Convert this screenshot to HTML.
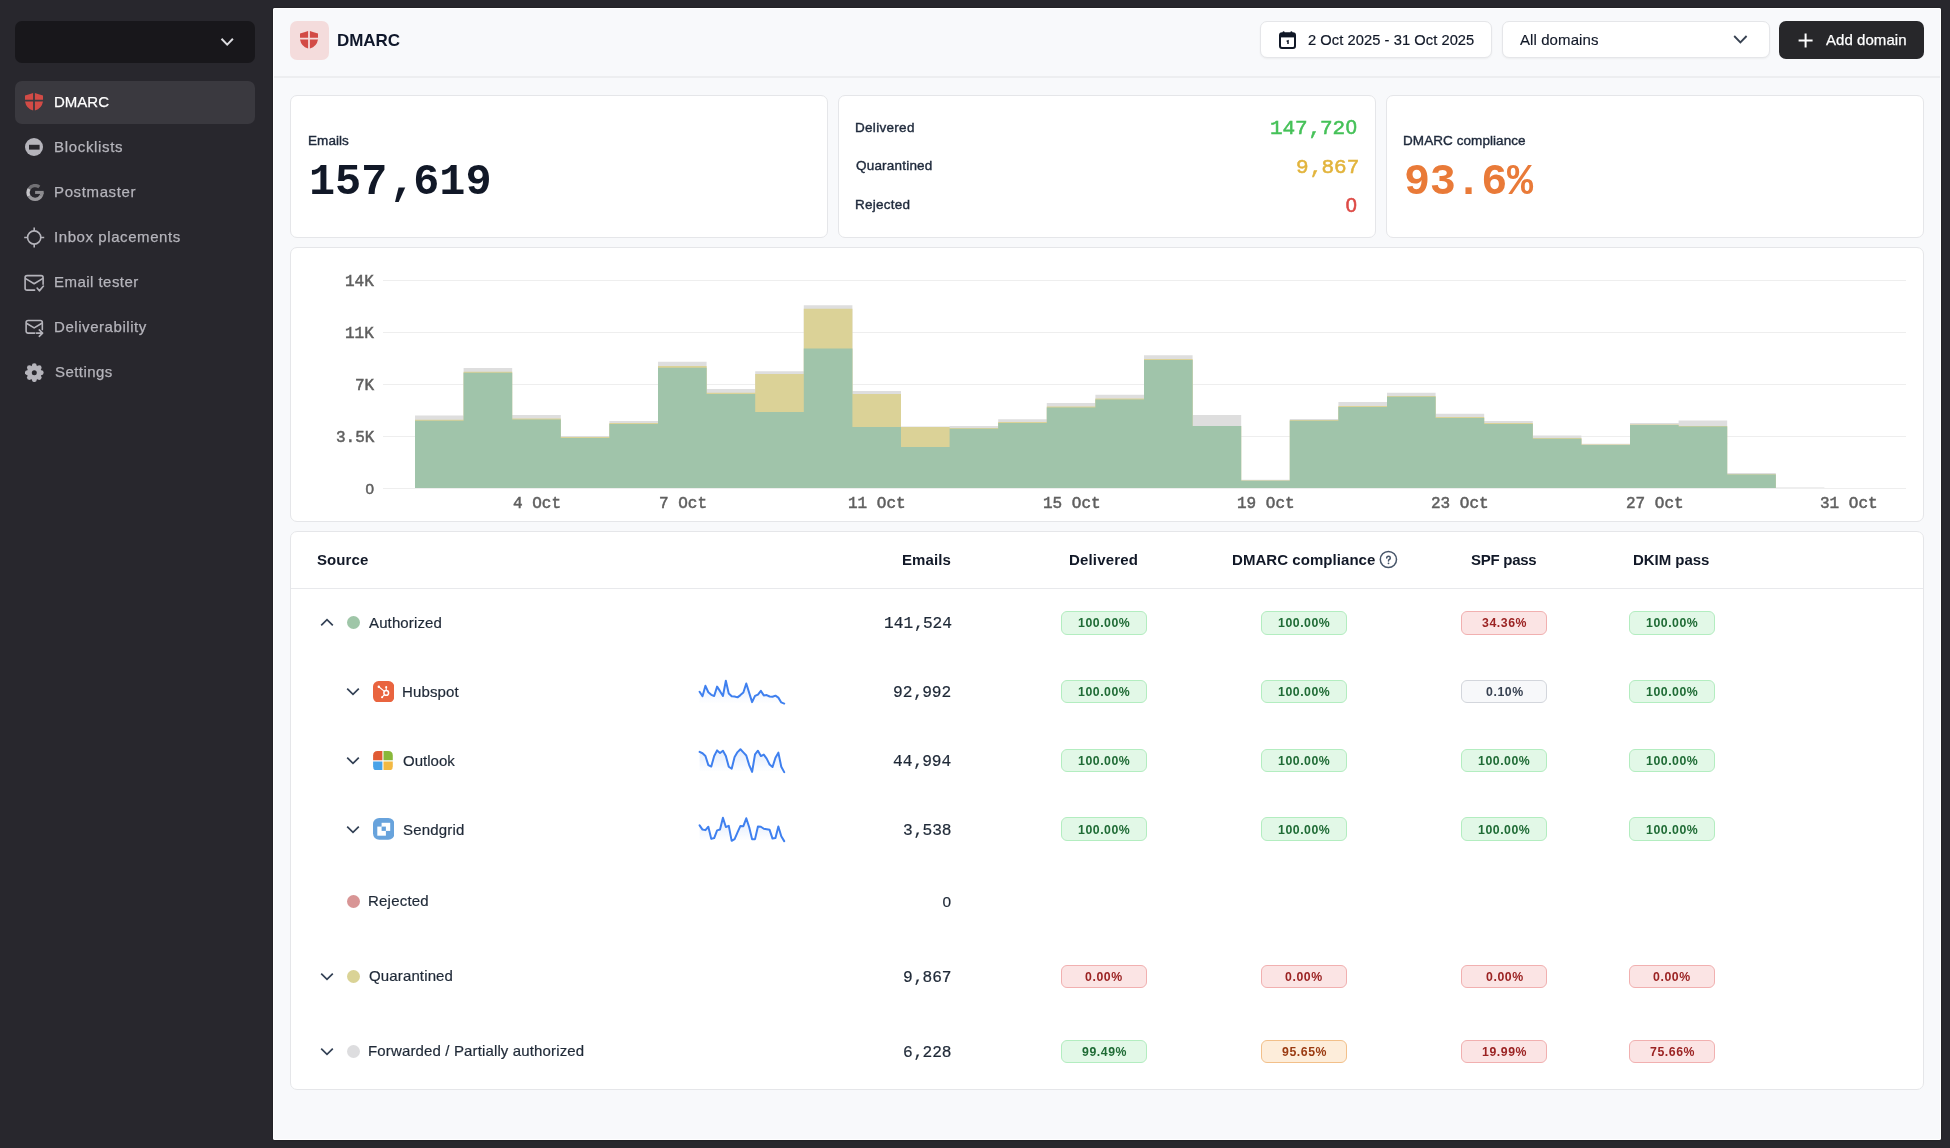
<!DOCTYPE html><html><head><meta charset="utf-8"><title>DMARC</title><style>
*{box-sizing:border-box;margin:0;padding:0}
html,body{width:1950px;height:1148px;overflow:hidden;background:#28272d;font-family:'Liberation Sans', sans-serif}
.abs{position:absolute}
.card{position:absolute;background:#fff;border:1px solid #e5e6e9;border-radius:7px}
.badge{position:absolute;width:86px;height:23.5px;border-radius:6px;border:1px solid}
</style></head><body>
<div class="abs" style="left:15px;top:21px;width:240px;height:42px;background:#18171b;border-radius:7px"></div>
<svg class="abs" style="left:219px;top:35px" width="16" height="14" viewBox="0 0 16 14"><path d="M2.5 3.8 L8.2 9.6 L13.9 3.8" fill="none" stroke="#dcdce0" stroke-width="2"/></svg>
<div class="abs" style="left:15px;top:81px;width:240px;height:43px;border-radius:7px;background:#3a393f"></div>
<svg class="abs" style="left:25px;top:93.2px" width="18" height="18" viewBox="0 0 18 18"><path d="M0 2.6 Q4.5 1.2 8.1 0 L8.1 6.7 L0 6.7 Z M9.9 0 Q13.5 1.2 18 2.6 L18 6.7 L9.9 6.7 Z M0 8.5 L8.1 8.5 L8.1 17.5 Q1.2 15.5 0 8.5 Z M9.9 8.5 L18 8.5 Q16.8 15.5 9.9 17.5 Z" fill="#d24b46"/></svg>
<div style="position:absolute;white-space:nowrap;line-height:1;will-change:transform;left:53.50px;top:94.40px;font-size:15px;color:#ffffff;-webkit-text-stroke:0.25px #ffffff;">DMARC</div>
<div style="position:absolute;white-space:nowrap;line-height:1;will-change:transform;left:53.50px;top:139.40px;font-size:15px;color:#b5b4bb;letter-spacing:0.676px;-webkit-text-stroke:0.25px #b5b4bb;">Blocklists</div>
<div style="position:absolute;white-space:nowrap;line-height:1;will-change:transform;left:53.50px;top:184.40px;font-size:15px;color:#b5b4bb;letter-spacing:0.626px;-webkit-text-stroke:0.25px #b5b4bb;">Postmaster</div>
<div style="position:absolute;white-space:nowrap;line-height:1;will-change:transform;left:53.50px;top:229.40px;font-size:15px;color:#b5b4bb;letter-spacing:0.582px;-webkit-text-stroke:0.25px #b5b4bb;">Inbox placements</div>
<div style="position:absolute;white-space:nowrap;line-height:1;will-change:transform;left:53.50px;top:274.40px;font-size:15px;color:#b5b4bb;letter-spacing:0.464px;-webkit-text-stroke:0.25px #b5b4bb;">Email tester</div>
<div style="position:absolute;white-space:nowrap;line-height:1;will-change:transform;left:53.50px;top:319.40px;font-size:15px;color:#b5b4bb;letter-spacing:0.559px;-webkit-text-stroke:0.25px #b5b4bb;">Deliverability</div>
<div style="position:absolute;white-space:nowrap;line-height:1;will-change:transform;left:54.50px;top:364.40px;font-size:15px;color:#b5b4bb;letter-spacing:0.429px;-webkit-text-stroke:0.25px #b5b4bb;">Settings</div>
<svg class="abs" style="left:25px;top:138px" width="18" height="18" viewBox="0 0 18 18"><circle cx="9" cy="9" r="9" fill="#b5b4bb"/><rect x="4" y="6.8" width="10.6" height="4.8" fill="#28272d"/></svg>
<svg class="abs" style="left:25.8px;top:184px" width="19" height="19" viewBox="0 0 19 19"><path d="M13.33 3.04 A6.95 6.95 0 0 0 3.16 4.84" fill="none" stroke="#717074" stroke-width="3.3"/><path d="M3.16 4.84 A6.95 6.95 0 0 0 3.16 12.20" fill="none" stroke="#c7c6ca" stroke-width="3.3"/><path d="M3.16 12.20 A6.95 6.95 0 0 0 15.19 11.78" fill="none" stroke="#98979b" stroke-width="3.3"/><path d="M15.07 11.99 A6.95 6.95 0 0 0 16.00 8.52" fill="none" stroke="#8c8b8f" stroke-width="3.3"/><path d="M9.1 8.42 H17.65" stroke="#8c8b8f" stroke-width="3.05"/></svg>
<svg class="abs" style="left:23px;top:226px" width="23" height="23" viewBox="0 0 23 23"><circle cx="11.2" cy="11.5" r="6.6" fill="none" stroke="#b5b4bb" stroke-width="1.6"/><path d="M11.2 1.5 V4.9 M11.2 18.1 V21.5 M1.2 11.5 H4.6 M17.8 11.5 H21.2" stroke="#b5b4bb" stroke-width="1.6"/></svg>
<svg class="abs" style="left:24.2px;top:273.8px" width="21" height="20" viewBox="0 0 21 20"><g fill="none" stroke="#b5b4bb" stroke-width="1.6" stroke-linecap="round" stroke-linejoin="round"><path d="M10.6 16.13 H3.1 Q1.1 16.13 1.1 14.13 V3.64 Q1.1 1.64 3.1 1.64 H17.1 Q19.1 1.64 19.1 3.64 V10.24"/><path d="M1.67 4.58 L10.16 9.79 L18.54 4.58"/><path d="M13.1 14.1 L15.37 16.86 L19.45 12.07"/></g></svg>
<svg class="abs" style="left:24.2px;top:319px" width="21" height="20" viewBox="0 0 21 20"><g fill="none" stroke="#b5b4bb" stroke-width="1.6" stroke-linecap="round" stroke-linejoin="round"><path d="M10.73 14.12 H4.12 Q2.12 14.12 2.12 12.12 V3.55 Q2.12 1.55 4.12 1.55 H16.32 Q18.32 1.55 18.32 3.55 V10.6"/><path d="M2.8 4.49 L10.16 8.91 L17.86 4.27"/><path d="M12.43 14.12 H18.6 M15.26 10.95 L18.6 14.12 L15.26 17.3"/></g></svg>
<svg class="abs" style="left:25px;top:363px" width="19" height="19" viewBox="0 0 19 19"><circle cx="9.3" cy="9.7" r="7.2" fill="#b5b4bb"/><circle cx="16.20" cy="9.70" r="2.45" fill="#b5b4bb"/><circle cx="14.18" cy="14.58" r="2.45" fill="#b5b4bb"/><circle cx="9.30" cy="16.60" r="2.45" fill="#b5b4bb"/><circle cx="4.42" cy="14.58" r="2.45" fill="#b5b4bb"/><circle cx="2.40" cy="9.70" r="2.45" fill="#b5b4bb"/><circle cx="4.42" cy="4.82" r="2.45" fill="#b5b4bb"/><circle cx="9.30" cy="2.80" r="2.45" fill="#b5b4bb"/><circle cx="14.18" cy="4.82" r="2.45" fill="#b5b4bb"/><circle cx="9.3" cy="9.7" r="2.5" fill="#28272d"/></svg>
<div class="abs" style="left:273px;top:8px;width:1668px;height:1132px;background:#f8f9fb;border-radius:2px;box-shadow:inset 0 0 0 1px #ffffff, 0 0 2px rgba(0,0,0,0.45)"></div>
<div class="abs" style="left:274px;top:76px;width:1666px;height:2px;background:#edeef0"></div>
<div class="abs" style="left:290px;top:21px;width:38.5px;height:38.5px;background:#f4dcdc;border-radius:7px"></div>
<svg class="abs" style="left:300px;top:31.0px" width="18" height="18" viewBox="0 0 18 18"><path d="M0 2.6 Q4.5 1.2 8.1 0 L8.1 6.7 L0 6.7 Z M9.9 0 Q13.5 1.2 18 2.6 L18 6.7 L9.9 6.7 Z M0 8.5 L8.1 8.5 L8.1 17.5 Q1.2 15.5 0 8.5 Z M9.9 8.5 L18 8.5 Q16.8 15.5 9.9 17.5 Z" fill="#d24b46"/></svg>
<div style="position:absolute;white-space:nowrap;line-height:1;will-change:transform;left:337.00px;top:31.81px;font-size:17px;color:#0f172a;font-weight:bold;letter-spacing:-0.048px;">DMARC</div>
<div class="card" style="left:1259.6px;top:21px;width:232.8px;height:37.4px;box-shadow:0 1px 2px rgba(0,0,0,0.05)"></div>
<svg class="abs" style="left:1278px;top:30px" width="19" height="20" viewBox="0 0 19 20"><rect x="2" y="3.2" width="15" height="14.8" rx="2" fill="none" stroke="#111827" stroke-width="2"/><rect x="2" y="3.2" width="15" height="4.2" fill="#111827"/><path d="M5.6 2.2 V4.6 M13.4 2.2 V4.6" stroke="#111827" stroke-width="2" stroke-linecap="round"/><path d="M8.6 11.4 L10 10.8 V14" fill="none" stroke="#111827" stroke-width="1.5"/></svg>
<div style="position:absolute;white-space:nowrap;line-height:1;will-change:transform;left:1307.80px;top:32.75px;font-size:14.7px;color:#111827;letter-spacing:0.058px;-webkit-text-stroke:0.2px #111827;">2 Oct 2025 - 31 Oct 2025</div>
<div class="card" style="left:1502px;top:21px;width:267.5px;height:37px;box-shadow:0 1px 2px rgba(0,0,0,0.05)"></div>
<div style="position:absolute;white-space:nowrap;line-height:1;will-change:transform;left:1519.80px;top:32.30px;font-size:15px;color:#111827;letter-spacing:0.087px;-webkit-text-stroke:0.15px #111827;">All domains</div>
<svg class="abs" style="left:1732px;top:33px" width="17" height="13" viewBox="0 0 17 13"><path d="M2.2 3 L8.4 9.4 L14.6 3" fill="none" stroke="#374151" stroke-width="1.8"/></svg>
<div class="abs" style="left:1779px;top:21px;width:145px;height:38px;background:#27272a;border-radius:7px"></div>
<svg class="abs" style="left:1797px;top:32px" width="17" height="17" viewBox="0 0 17 17"><path d="M8.6 1.5 V15.5 M1.6 8.5 H15.6" stroke="#fff" stroke-width="2"/></svg>
<div style="position:absolute;white-space:nowrap;line-height:1;will-change:transform;left:1826.00px;top:32.30px;font-size:15px;color:#ffffff;letter-spacing:0.054px;-webkit-text-stroke:0.25px #ffffff;">Add domain</div>
<div class="card" style="left:290px;top:95px;width:538px;height:143px"></div>
<div class="card" style="left:838px;top:95px;width:538px;height:143px"></div>
<div class="card" style="left:1386px;top:95px;width:538px;height:143px"></div>
<div style="position:absolute;white-space:nowrap;line-height:1;will-change:transform;left:307.50px;top:133.57px;font-size:13.5px;color:#1e293b;letter-spacing:0.069px;-webkit-text-stroke:0.4px #1e293b;">Emails</div>
<div style="position:absolute;white-space:nowrap;line-height:1;will-change:transform;left:308.60px;top:160.57px;font-size:43.5px;color:#111827;font-family:'Liberation Mono', monospace;font-weight:bold;letter-spacing:-0.038px;">157<span style="position:relative;left:0.05em">,</span>619</div>
<div style="position:absolute;white-space:nowrap;line-height:1;will-change:transform;left:855.10px;top:120.77px;font-size:13.5px;color:#1e293b;letter-spacing:0.298px;-webkit-text-stroke:0.4px #1e293b;">Delivered</div>
<div style="position:absolute;white-space:nowrap;line-height:1;will-change:transform;left:856.10px;top:159.27px;font-size:13.5px;color:#1e293b;letter-spacing:0.201px;-webkit-text-stroke:0.4px #1e293b;">Quarantined</div>
<div style="position:absolute;white-space:nowrap;line-height:1;will-change:transform;left:855.10px;top:198.07px;font-size:13.5px;color:#1e293b;letter-spacing:0.261px;-webkit-text-stroke:0.4px #1e293b;">Rejected</div>
<div style="position:absolute;white-space:nowrap;line-height:1;will-change:transform;left:1270.30px;top:118.31px;font-size:21px;color:#45c158;font-family:'Liberation Mono', monospace;letter-spacing:-0.119px;-webkit-text-stroke:0.55px #45c158;">147<span style="position:relative;left:0.05em">,</span>72<span style="font-family:'Liberation Sans';font-size:19.95px;line-height:0;margin-left:0.75px;letter-spacing:0.635px">0</span></div>
<div style="position:absolute;white-space:nowrap;line-height:1;will-change:transform;left:1295.50px;top:156.71px;font-size:21px;color:#e2b43c;font-family:'Liberation Mono', monospace;letter-spacing:0.073px;-webkit-text-stroke:0.55px #e2b43c;">9<span style="position:relative;left:0.05em">,</span>867</div>
<div style="position:absolute;white-space:nowrap;line-height:1;will-change:transform;left:1345.20px;top:195.51px;font-size:21px;color:#dd4a45;font-family:'Liberation Mono', monospace;-webkit-text-stroke:0.55px #dd4a45;"><span style="font-family:'Liberation Sans';font-size:19.95px;line-height:0;margin-left:0.75px;letter-spacing:0.754px">0</span></div>
<div style="position:absolute;white-space:nowrap;line-height:1;will-change:transform;left:1402.90px;top:133.57px;font-size:13.5px;color:#1e293b;letter-spacing:0.072px;-webkit-text-stroke:0.4px #1e293b;">DMARC compliance</div>
<div style="position:absolute;white-space:nowrap;line-height:1;will-change:transform;left:1403.70px;top:160.67px;font-size:43.5px;color:#e97a38;font-family:'Liberation Mono', monospace;font-weight:bold;letter-spacing:-0.354px;">93.6%</div>
<div class="card" style="left:290px;top:247px;width:1634px;height:275px"></div>
<svg style="position:absolute;left:0;top:0" width="1950" height="1148" viewBox="0 0 1950 1148"><rect x="383" y="280" width="1523" height="1" fill="#eeeeee"/><rect x="383" y="332" width="1523" height="1" fill="#eeeeee"/><rect x="383" y="384" width="1523" height="1" fill="#eeeeee"/><rect x="383" y="436" width="1523" height="1" fill="#eeeeee"/><rect x="383" y="488" width="1523" height="1" fill="#eeeeee"/><path d="M415.00,488.0 L415.00,415.50 L463.60,415.50 L463.60,368.00 L512.20,368.00 L512.20,415.00 L560.80,415.00 L560.80,435.90 L609.40,435.90 L609.40,420.90 L658.00,420.90 L658.00,361.80 L706.60,361.80 L706.60,389.10 L755.20,389.10 L755.20,371.30 L803.80,371.30 L803.80,305.20 L852.40,305.20 L852.40,391.00 L901.00,391.00 L901.00,426.50 L949.60,426.50 L949.60,426.00 L998.20,426.00 L998.20,419.30 L1046.80,419.30 L1046.80,402.90 L1095.40,402.90 L1095.40,394.80 L1144.00,394.80 L1144.00,355.20 L1192.60,355.20 L1192.60,415.00 L1241.20,415.00 L1241.20,479.80 L1289.80,479.80 L1289.80,418.90 L1338.40,418.90 L1338.40,402.10 L1387.00,402.10 L1387.00,392.70 L1435.60,392.70 L1435.60,413.75 L1484.20,413.75 L1484.20,421.00 L1532.80,421.00 L1532.80,435.40 L1581.40,435.40 L1581.40,443.75 L1630.00,443.75 L1630.00,423.00 L1678.60,423.00 L1678.60,420.50 L1727.20,420.50 L1727.20,473.00 L1775.80,473.00 L1775.80,487.40 L1824.40,487.40 L1824.40,488.0 Z" fill="#dedede"/><path d="M415.00,488.0 L415.00,419.80 L463.60,419.80 L463.60,371.70 L512.20,371.70 L512.20,418.60 L560.80,418.60 L560.80,437.00 L609.40,437.00 L609.40,423.00 L658.00,423.00 L658.00,365.90 L706.60,365.90 L706.60,392.70 L755.20,392.70 L755.20,373.90 L803.80,373.90 L803.80,308.75 L852.40,308.75 L852.40,394.10 L901.00,394.10 L901.00,427.10 L949.60,427.10 L949.60,428.00 L998.20,428.00 L998.20,422.00 L1046.80,422.00 L1046.80,406.50 L1095.40,406.50 L1095.40,398.50 L1144.00,398.50 L1144.00,359.00 L1192.60,359.00 L1192.60,426.00 L1241.20,426.00 L1241.20,480.50 L1289.80,480.50 L1289.80,420.00 L1338.40,420.00 L1338.40,406.00 L1387.00,406.00 L1387.00,396.00 L1435.60,396.00 L1435.60,417.00 L1484.20,417.00 L1484.20,423.00 L1532.80,423.00 L1532.80,438.00 L1581.40,438.00 L1581.40,444.50 L1630.00,444.50 L1630.00,424.50 L1678.60,424.50 L1678.60,426.00 L1727.20,426.00 L1727.20,474.30 L1775.80,474.30 L1775.80,488.00 L1824.40,488.00 L1824.40,488.0 Z" fill="#dbd297"/><path d="M415.00,488.0 L415.00,420.70 L463.60,420.70 L463.60,372.70 L512.20,372.70 L512.20,419.60 L560.80,419.60 L560.80,437.90 L609.40,437.90 L609.40,423.90 L658.00,423.90 L658.00,367.70 L706.60,367.70 L706.60,393.90 L755.20,393.90 L755.20,412.00 L803.80,412.00 L803.80,348.60 L852.40,348.60 L852.40,427.00 L901.00,427.00 L901.00,447.10 L949.60,447.10 L949.60,428.75 L998.20,428.75 L998.20,423.00 L1046.80,423.00 L1046.80,407.50 L1095.40,407.50 L1095.40,399.50 L1144.00,399.50 L1144.00,360.00 L1192.60,360.00 L1192.60,426.10 L1241.20,426.10 L1241.20,480.70 L1289.80,480.70 L1289.80,420.70 L1338.40,420.70 L1338.40,407.00 L1387.00,407.00 L1387.00,396.80 L1435.60,396.80 L1435.60,417.90 L1484.20,417.90 L1484.20,423.90 L1532.80,423.90 L1532.80,438.75 L1581.40,438.75 L1581.40,445.00 L1630.00,445.00 L1630.00,425.00 L1678.60,425.00 L1678.60,426.40 L1727.20,426.40 L1727.20,474.60 L1775.80,474.60 L1775.80,488.00 L1824.40,488.00 L1824.40,488.0 Z" fill="#a0c4aa"/></svg>
<div style="position:absolute;white-space:nowrap;line-height:1;will-change:transform;left:345.20px;top:273.94px;font-size:16px;color:#5f5f5f;font-family:'Liberation Mono', monospace;-webkit-text-stroke:0.5px #5f5f5f;">14K</div>
<div style="position:absolute;white-space:nowrap;line-height:1;will-change:transform;left:345.20px;top:325.94px;font-size:16px;color:#5f5f5f;font-family:'Liberation Mono', monospace;-webkit-text-stroke:0.5px #5f5f5f;">11K</div>
<div style="position:absolute;white-space:nowrap;line-height:1;will-change:transform;left:354.80px;top:377.94px;font-size:16px;color:#5f5f5f;font-family:'Liberation Mono', monospace;-webkit-text-stroke:0.5px #5f5f5f;">7K</div>
<div style="position:absolute;white-space:nowrap;line-height:1;will-change:transform;left:335.60px;top:429.94px;font-size:16px;color:#5f5f5f;font-family:'Liberation Mono', monospace;-webkit-text-stroke:0.5px #5f5f5f;">3.5K</div>
<div style="position:absolute;white-space:nowrap;line-height:1;will-change:transform;left:365.40px;top:481.94px;font-size:16px;color:#5f5f5f;font-family:'Liberation Mono', monospace;-webkit-text-stroke:0.5px #5f5f5f;"><span style="font-family:'Liberation Sans';font-size:15.20px;line-height:0;margin-left:0.57px;letter-spacing:0.574px">0</span></div>
<div style="position:absolute;white-space:nowrap;line-height:1;will-change:transform;left:513.30px;top:495.74px;font-size:16px;color:#5f5f5f;font-family:'Liberation Mono', monospace;-webkit-text-stroke:0.5px #5f5f5f;">4 Oct</div>
<div style="position:absolute;white-space:nowrap;line-height:1;will-change:transform;left:658.60px;top:495.74px;font-size:16px;color:#5f5f5f;font-family:'Liberation Mono', monospace;-webkit-text-stroke:0.5px #5f5f5f;">7 Oct</div>
<div style="position:absolute;white-space:nowrap;line-height:1;will-change:transform;left:848.20px;top:495.74px;font-size:16px;color:#5f5f5f;font-family:'Liberation Mono', monospace;-webkit-text-stroke:0.5px #5f5f5f;">11 Oct</div>
<div style="position:absolute;white-space:nowrap;line-height:1;will-change:transform;left:1042.60px;top:495.74px;font-size:16px;color:#5f5f5f;font-family:'Liberation Mono', monospace;-webkit-text-stroke:0.5px #5f5f5f;">15 Oct</div>
<div style="position:absolute;white-space:nowrap;line-height:1;will-change:transform;left:1237.00px;top:495.74px;font-size:16px;color:#5f5f5f;font-family:'Liberation Mono', monospace;-webkit-text-stroke:0.5px #5f5f5f;">19 Oct</div>
<div style="position:absolute;white-space:nowrap;line-height:1;will-change:transform;left:1431.40px;top:495.74px;font-size:16px;color:#5f5f5f;font-family:'Liberation Mono', monospace;-webkit-text-stroke:0.5px #5f5f5f;">23 Oct</div>
<div style="position:absolute;white-space:nowrap;line-height:1;will-change:transform;left:1625.80px;top:495.74px;font-size:16px;color:#5f5f5f;font-family:'Liberation Mono', monospace;-webkit-text-stroke:0.5px #5f5f5f;">27 Oct</div>
<div style="position:absolute;white-space:nowrap;line-height:1;will-change:transform;left:1820.20px;top:495.74px;font-size:16px;color:#5f5f5f;font-family:'Liberation Mono', monospace;-webkit-text-stroke:0.5px #5f5f5f;">31 Oct</div>
<div class="card" style="left:290px;top:531px;width:1634px;height:559px"></div>
<div class="abs" style="left:291px;top:587.5px;width:1632px;height:1.5px;background:#e8e9ec"></div>
<div style="position:absolute;white-space:nowrap;line-height:1;will-change:transform;left:316.60px;top:552.20px;font-size:15px;color:#111827;font-weight:bold;letter-spacing:0.098px;">Source</div>
<div style="position:absolute;white-space:nowrap;line-height:1;will-change:transform;left:902.40px;top:552.20px;font-size:15px;color:#111827;font-weight:bold;letter-spacing:0.116px;">Emails</div>
<div style="position:absolute;white-space:nowrap;line-height:1;will-change:transform;left:1068.70px;top:552.20px;font-size:15px;color:#111827;font-weight:bold;letter-spacing:0.166px;">Delivered</div>
<div style="position:absolute;white-space:nowrap;line-height:1;will-change:transform;left:1231.80px;top:552.20px;font-size:15px;color:#111827;font-weight:bold;letter-spacing:0.055px;">DMARC compliance</div>
<div style="position:absolute;white-space:nowrap;line-height:1;will-change:transform;left:1471.40px;top:552.20px;font-size:15px;color:#111827;font-weight:bold;letter-spacing:-0.270px;">SPF pass</div>
<div style="position:absolute;white-space:nowrap;line-height:1;will-change:transform;left:1633.20px;top:552.20px;font-size:15px;color:#111827;font-weight:bold;letter-spacing:-0.030px;">DKIM pass</div>
<svg class="abs" style="left:1378px;top:550px" width="20" height="20" viewBox="0 0 20 20"><circle cx="10.4" cy="9.5" r="8.1" fill="none" stroke="#475569" stroke-width="1.5"/><path d="M8.7 8.1 Q8.7 6.3 10.5 6.3 Q12.3 6.3 12.3 7.9 Q12.3 9 11.1 9.7 Q10.5 10.1 10.5 11" fill="none" stroke="#475569" stroke-width="1.5" stroke-linecap="round"/><circle cx="10.5" cy="13.3" r="0.9" fill="#475569"/></svg>
<svg class="abs" style="left:320px;top:618.4000000000001px" width="14" height="9" viewBox="0 0 14 9"><path d="M1.2 7.4 L7 1.6 L12.8 7.4" fill="none" stroke="#334155" stroke-width="1.7"/></svg>
<div class="abs" style="left:346.7px;top:616.4000000000001px;width:13px;height:13px;border-radius:50%;background:#9fc6a8"></div>
<div style="position:absolute;white-space:nowrap;line-height:1;will-change:transform;left:368.80px;top:614.80px;font-size:15px;color:#1f2937;letter-spacing:0.126px;-webkit-text-stroke:0.2px #1f2937;">Authorized</div>
<div style="position:absolute;white-space:nowrap;line-height:1;will-change:transform;left:883.72px;top:616.29px;font-size:16.2px;color:#1f2937;font-family:'Liberation Mono', monospace;-webkit-text-stroke:0.22px #1f2937;">141<span style="position:relative;left:0.05em">,</span>524</div>
<div class="badge" style="left:1061.00px;top:611.15px;background:#e2f8e7;border-color:#b3edc0"></div><div style="position:absolute;white-space:nowrap;line-height:1;will-change:transform;left:1077.97px;top:617.39px;font-size:12.3px;color:#1f6b35;font-weight:bold;letter-spacing:0.543px;">100.00%</div><div class="badge" style="left:1261.00px;top:611.15px;background:#e2f8e7;border-color:#b3edc0"></div><div style="position:absolute;white-space:nowrap;line-height:1;will-change:transform;left:1277.97px;top:617.39px;font-size:12.3px;color:#1f6b35;font-weight:bold;letter-spacing:0.543px;">100.00%</div><div class="badge" style="left:1461.40px;top:611.15px;background:#fbe4e4;border-color:#f1b0b0"></div><div style="position:absolute;white-space:nowrap;line-height:1;will-change:transform;left:1482.01px;top:617.39px;font-size:12.3px;color:#9b2323;font-weight:bold;letter-spacing:0.560px;">34.36%</div><div class="badge" style="left:1628.90px;top:611.15px;background:#e2f8e7;border-color:#b3edc0"></div><div style="position:absolute;white-space:nowrap;line-height:1;will-change:transform;left:1645.87px;top:617.39px;font-size:12.3px;color:#1f6b35;font-weight:bold;letter-spacing:0.543px;">100.00%</div>
<svg class="abs" style="left:346px;top:687.1px" width="14" height="9" viewBox="0 0 14 9"><path d="M1.2 1.6 L7 7.4 L12.8 1.6" fill="none" stroke="#334155" stroke-width="1.7"/></svg>
<svg class="abs" style="left:372.8px;top:680.9px" width="21.2" height="21.6" viewBox="0 0 21.2 21.6"><rect width="21.2" height="21.6" rx="5.6" fill="#e9643f"/><circle cx="13.23" cy="11.9" r="2.35" fill="none" stroke="#fff" stroke-width="1.5"/><path d="M13.23 9.55 V6.2 M11.4 10.4 L5.8 5.77 M11.6 13.6 L9.08 16.24" stroke="#fff" stroke-width="1.1"/><circle cx="13.23" cy="6.16" r="1.05" fill="#fff"/><circle cx="5.8" cy="5.77" r="1.2" fill="#fff"/><circle cx="9.08" cy="16.24" r="1.1" fill="#fff"/></svg>
<div style="position:absolute;white-space:nowrap;line-height:1;will-change:transform;left:402.20px;top:683.80px;font-size:15px;color:#1f2937;letter-spacing:0.150px;-webkit-text-stroke:0.2px #1f2937;">Hubspot</div>
<div style="position:absolute;white-space:nowrap;line-height:1;will-change:transform;left:893.43px;top:685.29px;font-size:16.2px;color:#1f2937;font-family:'Liberation Mono', monospace;-webkit-text-stroke:0.22px #1f2937;">92<span style="position:relative;left:0.05em">,</span>992</div>
<div class="badge" style="left:1061.00px;top:679.85px;background:#e2f8e7;border-color:#b3edc0"></div><div style="position:absolute;white-space:nowrap;line-height:1;will-change:transform;left:1077.97px;top:686.09px;font-size:12.3px;color:#1f6b35;font-weight:bold;letter-spacing:0.543px;">100.00%</div><div class="badge" style="left:1261.00px;top:679.85px;background:#e2f8e7;border-color:#b3edc0"></div><div style="position:absolute;white-space:nowrap;line-height:1;will-change:transform;left:1277.97px;top:686.09px;font-size:12.3px;color:#1f6b35;font-weight:bold;letter-spacing:0.543px;">100.00%</div><div class="badge" style="left:1461.40px;top:679.85px;background:#f7f8fa;border-color:#d3d6dc"></div><div style="position:absolute;white-space:nowrap;line-height:1;will-change:transform;left:1485.66px;top:686.09px;font-size:12.3px;color:#374151;font-weight:bold;letter-spacing:0.585px;">0.10%</div><div class="badge" style="left:1628.90px;top:679.85px;background:#e2f8e7;border-color:#b3edc0"></div><div style="position:absolute;white-space:nowrap;line-height:1;will-change:transform;left:1645.87px;top:686.09px;font-size:12.3px;color:#1f6b35;font-weight:bold;letter-spacing:0.543px;">100.00%</div>
<svg class="abs" style="left:346px;top:755.9000000000001px" width="14" height="9" viewBox="0 0 14 9"><path d="M1.2 1.6 L7 7.4 L12.8 1.6" fill="none" stroke="#334155" stroke-width="1.7"/></svg>
<svg class="abs" style="left:373.2px;top:750.6px" width="19.9" height="19.7" viewBox="0 0 20 20"><path d="M0 4.6 Q0 0 4.6 0 H9.45 V9.45 H0 Z" fill="#e05b34"/><path d="M10.55 0 H15.4 Q20 0 20 4.6 V9.45 H10.55 Z" fill="#89b83a"/><path d="M0 10.55 H9.45 V20 H4.6 Q0 20 0 15.4 Z" fill="#48a2e8"/><path d="M10.55 10.55 H20 V15.4 Q20 20 15.4 20 H10.55 Z" fill="#f3b943"/></svg>
<div style="position:absolute;white-space:nowrap;line-height:1;will-change:transform;left:402.90px;top:752.80px;font-size:15px;color:#1f2937;letter-spacing:0.018px;-webkit-text-stroke:0.2px #1f2937;">Outlook</div>
<div style="position:absolute;white-space:nowrap;line-height:1;will-change:transform;left:893.43px;top:754.29px;font-size:16.2px;color:#1f2937;font-family:'Liberation Mono', monospace;-webkit-text-stroke:0.22px #1f2937;">44<span style="position:relative;left:0.05em">,</span>994</div>
<div class="badge" style="left:1061.00px;top:748.65px;background:#e2f8e7;border-color:#b3edc0"></div><div style="position:absolute;white-space:nowrap;line-height:1;will-change:transform;left:1077.97px;top:754.89px;font-size:12.3px;color:#1f6b35;font-weight:bold;letter-spacing:0.543px;">100.00%</div><div class="badge" style="left:1261.00px;top:748.65px;background:#e2f8e7;border-color:#b3edc0"></div><div style="position:absolute;white-space:nowrap;line-height:1;will-change:transform;left:1277.97px;top:754.89px;font-size:12.3px;color:#1f6b35;font-weight:bold;letter-spacing:0.543px;">100.00%</div><div class="badge" style="left:1461.40px;top:748.65px;background:#e2f8e7;border-color:#b3edc0"></div><div style="position:absolute;white-space:nowrap;line-height:1;will-change:transform;left:1478.37px;top:754.89px;font-size:12.3px;color:#1f6b35;font-weight:bold;letter-spacing:0.543px;">100.00%</div><div class="badge" style="left:1628.90px;top:748.65px;background:#e2f8e7;border-color:#b3edc0"></div><div style="position:absolute;white-space:nowrap;line-height:1;will-change:transform;left:1645.87px;top:754.89px;font-size:12.3px;color:#1f6b35;font-weight:bold;letter-spacing:0.543px;">100.00%</div>
<svg class="abs" style="left:346px;top:824.7px" width="14" height="9" viewBox="0 0 14 9"><path d="M1.2 1.6 L7 7.4 L12.8 1.6" fill="none" stroke="#334155" stroke-width="1.7"/></svg>
<svg class="abs" style="left:372.6px;top:818.30px" width="21.5" height="21.8" viewBox="0 0 21.5 21.8"><rect width="21.5" height="21.8" rx="6.2" fill="#68a3dc"/><rect x="8.6" y="4.8" width="8.6" height="8.1" fill="#fff"/><rect x="4.3" y="8.6" width="8.6" height="9.1" fill="#fff"/><rect x="8.6" y="8.6" width="4.3" height="4.3" fill="#68a3dc"/></svg>
<div style="position:absolute;white-space:nowrap;line-height:1;will-change:transform;left:402.90px;top:821.60px;font-size:15px;color:#1f2937;letter-spacing:0.185px;-webkit-text-stroke:0.2px #1f2937;">Sendgrid</div>
<div style="position:absolute;white-space:nowrap;line-height:1;will-change:transform;left:903.14px;top:823.09px;font-size:16.2px;color:#1f2937;font-family:'Liberation Mono', monospace;-webkit-text-stroke:0.22px #1f2937;">3<span style="position:relative;left:0.05em">,</span>538</div>
<div class="badge" style="left:1061.00px;top:817.45px;background:#e2f8e7;border-color:#b3edc0"></div><div style="position:absolute;white-space:nowrap;line-height:1;will-change:transform;left:1077.97px;top:823.69px;font-size:12.3px;color:#1f6b35;font-weight:bold;letter-spacing:0.543px;">100.00%</div><div class="badge" style="left:1261.00px;top:817.45px;background:#e2f8e7;border-color:#b3edc0"></div><div style="position:absolute;white-space:nowrap;line-height:1;will-change:transform;left:1277.97px;top:823.69px;font-size:12.3px;color:#1f6b35;font-weight:bold;letter-spacing:0.543px;">100.00%</div><div class="badge" style="left:1461.40px;top:817.45px;background:#e2f8e7;border-color:#b3edc0"></div><div style="position:absolute;white-space:nowrap;line-height:1;will-change:transform;left:1478.37px;top:823.69px;font-size:12.3px;color:#1f6b35;font-weight:bold;letter-spacing:0.543px;">100.00%</div><div class="badge" style="left:1628.90px;top:817.45px;background:#e2f8e7;border-color:#b3edc0"></div><div style="position:absolute;white-space:nowrap;line-height:1;will-change:transform;left:1645.87px;top:823.69px;font-size:12.3px;color:#1f6b35;font-weight:bold;letter-spacing:0.543px;">100.00%</div>
<div class="abs" style="left:346.7px;top:894.6px;width:13px;height:13px;border-radius:50%;background:#d89595"></div>
<div style="position:absolute;white-space:nowrap;line-height:1;will-change:transform;left:367.60px;top:893.10px;font-size:15px;color:#1f2937;letter-spacing:0.206px;-webkit-text-stroke:0.2px #1f2937;">Rejected</div>
<div style="position:absolute;white-space:nowrap;line-height:1;will-change:transform;left:942.00px;top:894.59px;font-size:16.2px;color:#1f2937;font-family:'Liberation Mono', monospace;-webkit-text-stroke:0.22px #1f2937;"><span style="font-family:'Liberation Sans';font-size:15.39px;line-height:0;margin-left:0.58px;letter-spacing:0.582px">0</span></div>
<svg class="abs" style="left:320px;top:971.8px" width="14" height="9" viewBox="0 0 14 9"><path d="M1.2 1.6 L7 7.4 L12.8 1.6" fill="none" stroke="#334155" stroke-width="1.7"/></svg>
<div class="abs" style="left:346.7px;top:969.8px;width:13px;height:13px;border-radius:50%;background:#dad396"></div>
<div style="position:absolute;white-space:nowrap;line-height:1;will-change:transform;left:368.60px;top:968.40px;font-size:15px;color:#1f2937;letter-spacing:0.138px;-webkit-text-stroke:0.2px #1f2937;">Quarantined</div>
<div style="position:absolute;white-space:nowrap;line-height:1;will-change:transform;left:903.14px;top:969.89px;font-size:16.2px;color:#1f2937;font-family:'Liberation Mono', monospace;-webkit-text-stroke:0.22px #1f2937;">9<span style="position:relative;left:0.05em">,</span>867</div>
<div class="badge" style="left:1061.00px;top:964.55px;background:#fbe4e4;border-color:#f1b0b0"></div><div style="position:absolute;white-space:nowrap;line-height:1;will-change:transform;left:1085.26px;top:970.79px;font-size:12.3px;color:#9b2323;font-weight:bold;letter-spacing:0.585px;">0.00%</div><div class="badge" style="left:1261.00px;top:964.55px;background:#fbe4e4;border-color:#f1b0b0"></div><div style="position:absolute;white-space:nowrap;line-height:1;will-change:transform;left:1285.26px;top:970.79px;font-size:12.3px;color:#9b2323;font-weight:bold;letter-spacing:0.585px;">0.00%</div><div class="badge" style="left:1461.40px;top:964.55px;background:#fbe4e4;border-color:#f1b0b0"></div><div style="position:absolute;white-space:nowrap;line-height:1;will-change:transform;left:1485.66px;top:970.79px;font-size:12.3px;color:#9b2323;font-weight:bold;letter-spacing:0.585px;">0.00%</div><div class="badge" style="left:1628.90px;top:964.55px;background:#fbe4e4;border-color:#f1b0b0"></div><div style="position:absolute;white-space:nowrap;line-height:1;will-change:transform;left:1653.16px;top:970.79px;font-size:12.3px;color:#9b2323;font-weight:bold;letter-spacing:0.585px;">0.00%</div>
<svg class="abs" style="left:320px;top:1046.8px" width="14" height="9" viewBox="0 0 14 9"><path d="M1.2 1.6 L7 7.4 L12.8 1.6" fill="none" stroke="#334155" stroke-width="1.7"/></svg>
<div class="abs" style="left:346.7px;top:1044.8px;width:13px;height:13px;border-radius:50%;background:#dddddf"></div>
<div style="position:absolute;white-space:nowrap;line-height:1;will-change:transform;left:367.60px;top:1043.40px;font-size:15px;color:#1f2937;letter-spacing:0.141px;-webkit-text-stroke:0.2px #1f2937;">Forwarded / Partially authorized</div>
<div style="position:absolute;white-space:nowrap;line-height:1;will-change:transform;left:903.14px;top:1044.89px;font-size:16.2px;color:#1f2937;font-family:'Liberation Mono', monospace;-webkit-text-stroke:0.22px #1f2937;">6<span style="position:relative;left:0.05em">,</span>228</div>
<div class="badge" style="left:1061.00px;top:1039.55px;background:#e2f8e7;border-color:#b3edc0"></div><div style="position:absolute;white-space:nowrap;line-height:1;will-change:transform;left:1081.61px;top:1045.79px;font-size:12.3px;color:#1f6b35;font-weight:bold;letter-spacing:0.560px;">99.49%</div><div class="badge" style="left:1261.00px;top:1039.55px;background:#fdedda;border-color:#f2c08a"></div><div style="position:absolute;white-space:nowrap;line-height:1;will-change:transform;left:1281.61px;top:1045.79px;font-size:12.3px;color:#9a3b12;font-weight:bold;letter-spacing:0.560px;">95.65%</div><div class="badge" style="left:1461.40px;top:1039.55px;background:#fbe4e4;border-color:#f1b0b0"></div><div style="position:absolute;white-space:nowrap;line-height:1;will-change:transform;left:1482.01px;top:1045.79px;font-size:12.3px;color:#9b2323;font-weight:bold;letter-spacing:0.560px;">19.99%</div><div class="badge" style="left:1628.90px;top:1039.55px;background:#fbe4e4;border-color:#f1b0b0"></div><div style="position:absolute;white-space:nowrap;line-height:1;will-change:transform;left:1649.51px;top:1045.79px;font-size:12.3px;color:#9b2323;font-weight:bold;letter-spacing:0.560px;">75.66%</div>
<svg style="position:absolute;left:0;top:0" width="1950" height="1148" viewBox="0 0 1950 1148"><defs><linearGradient id="sg0" x1="0" y1="0" x2="0" y2="1"><stop offset="0" stop-color="#3f80ef" stop-opacity="0.16"/><stop offset="1" stop-color="#3f80ef" stop-opacity="0"/></linearGradient><linearGradient id="sg1" x1="0" y1="0" x2="0" y2="1"><stop offset="0" stop-color="#3f80ef" stop-opacity="0.16"/><stop offset="1" stop-color="#3f80ef" stop-opacity="0"/></linearGradient><linearGradient id="sg2" x1="0" y1="0" x2="0" y2="1"><stop offset="0" stop-color="#3f80ef" stop-opacity="0.16"/><stop offset="1" stop-color="#3f80ef" stop-opacity="0"/></linearGradient></defs><path d="M699.59,691.72 L702.51,696.23 L705.43,685.80 L708.34,692.28 L711.26,694.82 L714.18,695.95 L717.10,686.64 L720.01,691.15 L722.93,695.95 L725.85,680.72 L728.77,693.41 L731.68,696.23 L734.60,696.51 L737.52,697.36 L740.44,695.10 L743.35,692.56 L746.27,683.54 L749.19,692.85 L752.11,702.15 L755.02,695.95 L757.94,694.54 L760.86,690.87 L763.78,695.39 L766.69,695.10 L769.61,696.51 L772.53,696.80 L775.45,695.67 L778.36,697.64 L781.28,702.44 L784.20,703.56 L784.20,703.28 L699.59,703.28 Z" fill="url(#sg0)"/><path d="M699.59,691.72 L702.51,696.23 L705.43,685.80 L708.34,692.28 L711.26,694.82 L714.18,695.95 L717.10,686.64 L720.01,691.15 L722.93,695.95 L725.85,680.72 L728.77,693.41 L731.68,696.23 L734.60,696.51 L737.52,697.36 L740.44,695.10 L743.35,692.56 L746.27,683.54 L749.19,692.85 L752.11,702.15 L755.02,695.95 L757.94,694.54 L760.86,690.87 L763.78,695.39 L766.69,695.10 L769.61,696.51 L772.53,696.80 L775.45,695.67 L778.36,697.64 L781.28,702.44 L784.20,703.56" fill="none" stroke="#3f80ef" stroke-width="2" stroke-linejoin="round" stroke-linecap="round"/><path d="M699.59,751.82 L702.51,753.23 L705.43,756.05 L708.34,765.08 L711.26,766.49 L714.18,756.05 L717.10,750.41 L720.01,752.95 L722.93,750.69 L725.85,756.05 L728.77,766.77 L731.68,768.74 L734.60,756.90 L737.52,752.10 L740.44,749.28 L743.35,752.38 L746.27,755.49 L749.19,765.08 L752.11,771.85 L755.02,754.36 L757.94,750.69 L760.86,756.05 L763.78,754.64 L766.69,758.59 L769.61,764.51 L772.53,767.05 L775.45,757.74 L778.36,752.67 L781.28,766.77 L784.20,772.13 L784.20,771.28 L699.59,771.28 Z" fill="url(#sg1)"/><path d="M699.59,751.82 L702.51,753.23 L705.43,756.05 L708.34,765.08 L711.26,766.49 L714.18,756.05 L717.10,750.41 L720.01,752.95 L722.93,750.69 L725.85,756.05 L728.77,766.77 L731.68,768.74 L734.60,756.90 L737.52,752.10 L740.44,749.28 L743.35,752.38 L746.27,755.49 L749.19,765.08 L752.11,771.85 L755.02,754.36 L757.94,750.69 L760.86,756.05 L763.78,754.64 L766.69,758.59 L769.61,764.51 L772.53,767.05 L775.45,757.74 L778.36,752.67 L781.28,766.77 L784.20,772.13" fill="none" stroke="#3f80ef" stroke-width="2" stroke-linejoin="round" stroke-linecap="round"/><path d="M699.59,825.33 L702.51,829.56 L705.43,830.13 L708.34,826.74 L711.26,838.87 L714.18,838.03 L717.10,830.41 L720.01,829.56 L722.93,817.72 L725.85,827.03 L728.77,825.90 L731.68,840.85 L734.60,839.15 L737.52,832.39 L740.44,825.90 L743.35,826.18 L746.27,818.28 L749.19,827.31 L752.11,839.15 L755.02,839.15 L757.94,826.46 L760.86,826.74 L763.78,828.72 L766.69,829.28 L769.61,829.85 L772.53,838.59 L775.45,838.03 L778.36,826.46 L781.28,836.33 L784.20,841.13 L784.20,840.28 L699.59,840.28 Z" fill="url(#sg2)"/><path d="M699.59,825.33 L702.51,829.56 L705.43,830.13 L708.34,826.74 L711.26,838.87 L714.18,838.03 L717.10,830.41 L720.01,829.56 L722.93,817.72 L725.85,827.03 L728.77,825.90 L731.68,840.85 L734.60,839.15 L737.52,832.39 L740.44,825.90 L743.35,826.18 L746.27,818.28 L749.19,827.31 L752.11,839.15 L755.02,839.15 L757.94,826.46 L760.86,826.74 L763.78,828.72 L766.69,829.28 L769.61,829.85 L772.53,838.59 L775.45,838.03 L778.36,826.46 L781.28,836.33 L784.20,841.13" fill="none" stroke="#3f80ef" stroke-width="2" stroke-linejoin="round" stroke-linecap="round"/></svg>
</body></html>
